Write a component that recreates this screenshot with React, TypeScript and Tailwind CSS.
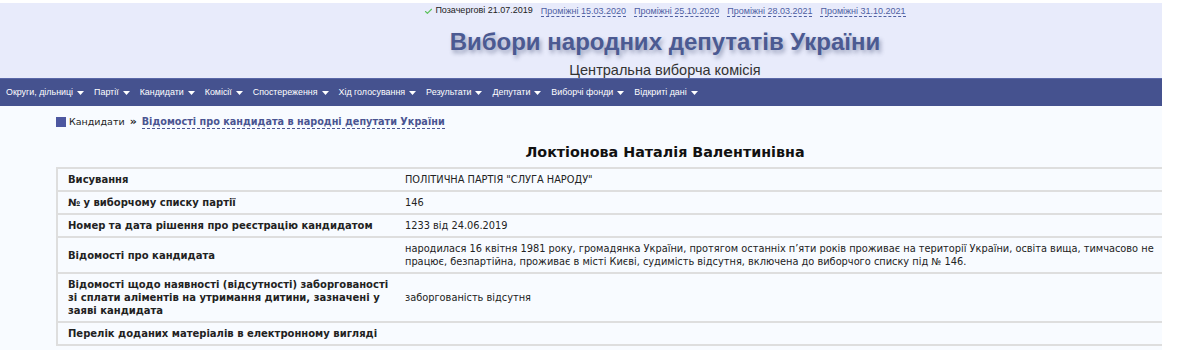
import { Check } from "lucide-react"

const elections = [
    "Проміжні 15.03.2020",
    "Проміжні 25.10.2020",
    "Проміжні 28.03.2021",
    "Проміжні 31.10.2021",
]

const menu = [
    "Округи, дільниці",
    "Партії",
    "Кандидати",
    "Комісії",
    "Спостереження",
    "Хід голосування",
    "Результати",
    "Депутати",
    "Виборчі фонди",
    "Відкриті дані",
]

const rows = [
    {
        label: "Висування",
        value: 'ПОЛІТИЧНА ПАРТІЯ "СЛУГА НАРОДУ"',
    },
    {
        label: "№ у виборчому списку партії",
        value: "146",
    },
    {
        label: "Номер та дата рішення про реєстрацію кандидатом",
        value: "1233 від 24.06.2019",
    },
    {
        label: "Відомості про кандидата",
        value:
            "народилася 16 квітня 1981 року, громадянка України, протягом останніх п’яти років проживає на території України, освіта вища, тимчасово не працює, безпартійна, проживає в місті Києві, судимість відсутня, включена до виборчого списку під № 146.",
    },
    {
        label: "Відомості щодо наявності (відсутності) заборгованості зі сплати аліментів на утримання дитини, зазначені у заяві кандидата",
        value: "заборгованість відсутня",
    },
    {
        label: "Перелік доданих матеріалів в електронному вигляді",
        value: "",
    },
]

function Caret() {
    return (
        <svg
            width="7"
            height="4"
            viewBox="0 0 7 4"
            className="ml-[4px] mt-[1px]"
        >
            <path d="M0 0h7L3.5 4z" fill="#ffffff" />
        </svg>
    )
}

export default function App() {
    return (
        <div className="w-[1162px] pt-[3px] bg-white font-['DejaVu_Sans',sans-serif] text-[#222]">
            <header className="h-[75px] bg-[#e8ebfb] pl-[168px] flex flex-col items-center">
                <div className="flex items-center gap-[8px] pt-[2px] h-[14px] font-['Liberation_Sans',sans-serif] text-[9px]">
                    <span className="flex items-center gap-[2px] text-[#222]">
                        <Check
                            size={9}
                            strokeWidth={3}
                            className="text-[#5cc25c]"
                        />
                        Позачергові 21.07.2019
                    </span>

                    {elections.map((e) => (
                        <a
                            key={e}
                            className="text-[#4f5fa3] border-b border-dashed border-[#4f5fa3] leading-[10px]"
                        >
                            {e}
                        </a>
                    ))}
                </div>

                <h1 className="mt-[11px] font-['Liberation_Sans',sans-serif] font-bold text-[24px] leading-[28px] text-[#4b5a92] [text-shadow:2px_3px_4px_rgba(60,70,110,0.45)]">
                    Вибори народних депутатів України
                </h1>

                <p className="mt-[6px] font-['Liberation_Sans',sans-serif] text-[14.5px] leading-[16px] text-[#333]">
                    Центральна виборча комісія
                </p>
            </header>

            <nav className="h-[28px] bg-[#45528f] border-t border-[#5a68a8] flex items-center pl-[6px] gap-[10px] font-['Liberation_Sans',sans-serif] text-[8.9px] text-white">
                {menu.map((m) => (
                    <span key={m} className="flex items-center">
                        {m}
                        <Caret />
                    </span>
                ))}
            </nav>

            <main className="bg-[#f8fbff] pl-[56px] pt-[9px] pb-[8px]">
                <div className="flex items-center text-[9.5px] leading-[14px]">
                    <span className="w-[10px] h-[10px] bg-[#4d57a0] mr-[3px]" />
                    <span>Кандидати</span>
                    <span className="font-bold mx-[5px] text-[11px]">»</span>
                    <a className="font-bold text-[9.7px] text-[#4a5592] border-b border-dashed border-[#4a5592] leading-[12px]">
                        Відомості про кандидата в народні депутати України
                    </a>
                </div>

                <h2 className="pl-[112px] mt-[15px] text-center font-bold text-[14.3px] leading-[17px] text-[#111]">
                    Локтіонова Наталія Валентинівна
                </h2>

                <table className="mt-[6px] w-full border-collapse border-t-2 border-l-2 border-[#dedede] text-[9.8px] leading-[13px]">
                    <tbody>
                        {rows.map((r) => (
                            <tr
                                key={r.label}
                                className="border-b-2 border-[#dedede]"
                            >
                                <td className="w-[338px] pl-[10px] pr-[5px] py-[4px] font-bold text-[10px] align-middle">
                                    {r.label}
                                </td>
                                <td className="pl-[10px] pr-[6px] py-[4px] align-middle">
                                    {r.value}
                                </td>
                            </tr>
                        ))}
                    </tbody>
                </table>
            </main>
        </div>
    )
}
